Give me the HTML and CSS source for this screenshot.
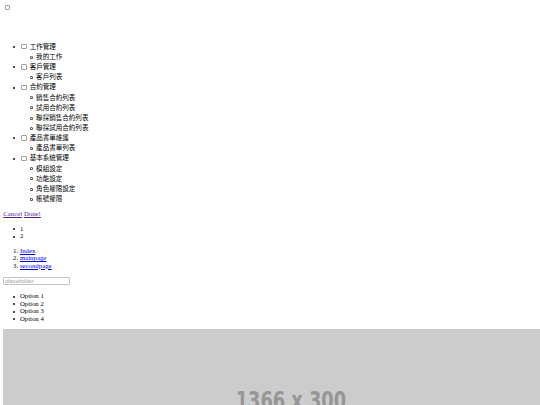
FILE: index.html
```html
<!DOCTYPE html>
<html lang="zh-Hant">
<head>
<meta charset="utf-8">
<title>Menu</title>
<link rel="stylesheet" href="styles.css">
</head>
<body>
<input type="checkbox" class="toggle">
<nav class="menu">
  <ul class="menu-list">
    <li><input type="checkbox" class="menu-check"> 工作管理
      <ul class="sub"><li>我的工作</li></ul>
    </li>
    <li><input type="checkbox" class="menu-check"> 客戶管理
      <ul class="sub"><li>客戶列表</li></ul>
    </li>
    <li><input type="checkbox" class="menu-check"> 合約管理
      <ul class="sub">
        <li>銷售合約列表</li>
        <li>試用合約列表</li>
        <li>聯採銷售合約列表</li>
        <li>聯採試用合約列表</li>
      </ul>
    </li>
    <li><input type="checkbox" class="menu-check"> 產品書單維護
      <ul class="sub"><li>產品書單列表</li></ul>
    </li>
    <li><input type="checkbox" class="menu-check"> 基本系統管理
      <ul class="sub">
        <li>模組設定</li>
        <li>功能設定</li>
        <li>角色權限設定</li>
        <li>帳號權限</li>
      </ul>
    </li>
  </ul>
</nav>
<div class="actions"><a href="#" class="link-visited">Cancel</a> <a href="#" class="link-visited">Done!</a></div>
<ul class="list bullets">
  <li>1</li>
  <li>2</li>
</ul>
<ol class="list">
  <li><a href="#" class="link">Index</a></li>
  <li><a href="#" class="link">mainpage</a></li>
  <li><a href="#" class="link">secondpage</a></li>
</ol>
<div class="field-row"><input type="text" class="field" placeholder="placeholder"></div>
<ul class="list bullets">
  <li>Option 1</li>
  <li>Option 2</li>
  <li>Option 3</li>
  <li>Option 4</li>
</ul>
<div class="banner"><span class="banner-text">1366 x 300</span></div>
</body>
</html>
```
FILE: styles.css
```css
html {
  overflow: hidden;
  background: #fff;
}
body {
  margin: 3.3px 0 3.3px 3.3px;
  font-family: "Liberation Serif", "Noto Sans CJK TC", serif;
  font-size: 6.8px;
  line-height: 7.5px;
  color: #000;
}
.toggle {
  -webkit-appearance: none;
  appearance: none;
  display: block;
  box-sizing: border-box;
  width: 5.3px;
  height: 5.3px;
  margin: 1.3px 1.2px 1.2px 1.6px;
  border: 1px solid #a0a0a0;
  border-radius: 1px;
  background: #fff;
}
.menu {
  display: block;
}
.menu-list {
  margin: 31px 0 7.1px;
  padding-left: 16.4px;
  list-style: none;
  font-family: "Noto Sans CJK TC", "Noto Sans", sans-serif;
  font-size: 6.56px;
  line-height: 10.14px;
}
.menu-list > li::before,
.bullets > li::before {
  content: "";
  display: inline-block;
  width: 2px;
  height: 2px;
  margin: 0 4.7px 0 -6.7px;
  border-radius: 50%;
  background: #111;
  vertical-align: middle;
}
.menu-check {
  -webkit-appearance: none;
  appearance: none;
  box-sizing: border-box;
  width: 5.3px;
  height: 5.3px;
  margin: 0 1.4px 0 1.8px;
  border: 1px solid #a0a0a0;
  border-radius: 1px;
  background: #fff;
  vertical-align: -0.6px;
}
.sub {
  margin: 0;
  padding-left: 16.4px;
  list-style: none;
}
.sub > li::before {
  content: "";
  display: inline-block;
  width: 3px;
  height: 3px;
  margin: 0 3.4px 0 -6.4px;
  border-radius: 50%;
  background: radial-gradient(circle, transparent 40%, #333 48%, #333 68%, transparent 76%);
  vertical-align: middle;
}
.actions {
  line-height: 7.5px;
}
.link-visited {
  color: #551a8b;
}
.link {
  color: #0000ee;
}
.list {
  margin: 7.1px 0;
  padding-left: 16.6px;
}
.bullets {
  list-style: none;
}
.field-row {
  line-height: 0;
}
.field {
  box-sizing: border-box;
  width: 67px;
  height: 8.6px;
  margin: 0;
  padding: 0 1px;
  border: 1px solid #c4c4c4;
  border-radius: 1px;
  font-family: "Liberation Sans", Arial, sans-serif;
  font-size: 5.5px;
}
.field::placeholder {
  color: #9a9a9a;
}
.banner {
  box-sizing: border-box;
  width: 576px;
  height: 130px;
  margin-top: 7.1px;
  padding-top: 59px;
  background: #cccccc;
  text-align: center;
  line-height: 25px;
}
.banner-text {
  display: inline-block;
  font-family: "DejaVu Sans Condensed", "DejaVu Sans", sans-serif;
  font-stretch: condensed;
  font-weight: bold;
  font-size: 25px;
  color: #969696;
  transform: scaleX(0.79);
}
```
